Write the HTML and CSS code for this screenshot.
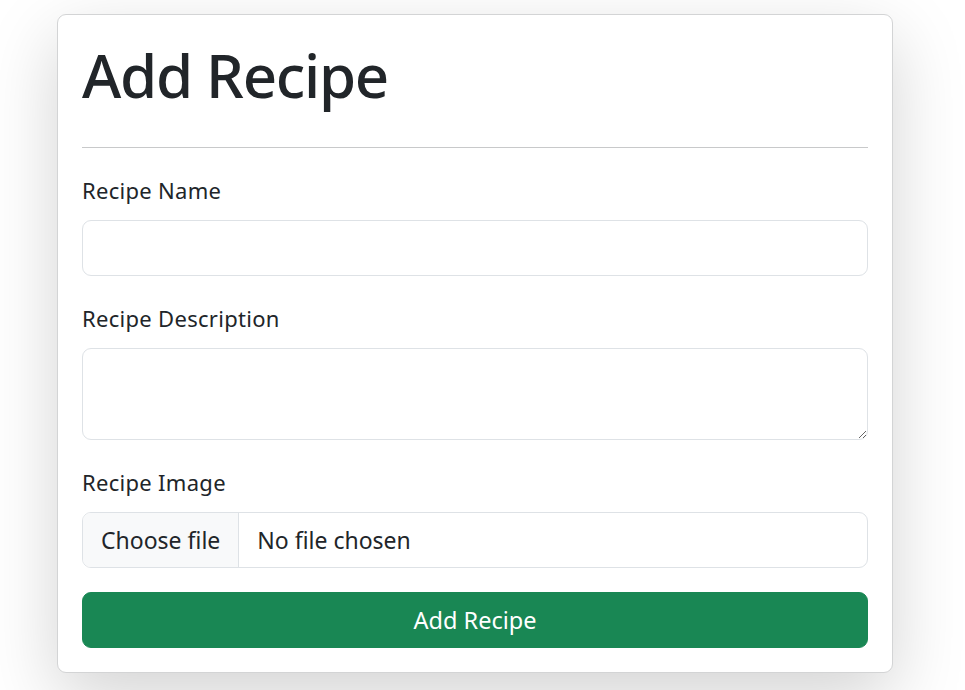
FILE: index.html
```html
<!DOCTYPE html>
<html lang="en">
<head>
<meta charset="utf-8">
<title>Add Recipe</title>
<link rel="stylesheet" href="styles.css">
</head>
<body>
<main class="page">
  <section class="card">
    <h1 class="title">Add Recipe</h1>
    <hr class="divider">
    <form class="form">
      <div class="field">
        <label class="label" for="name">Recipe Name</label>
        <input class="control" id="name" type="text">
      </div>
      <div class="field">
        <label class="label" for="desc">Recipe Description</label>
        <textarea class="control textarea" id="desc"></textarea>
      </div>
      <div class="field">
        <label class="label" for="img">Recipe Image</label>
        <div class="file" id="img">
          <span class="file-btn">Choose file</span>
          <span class="file-name">No file chosen</span>
        </div>
      </div>
      <button class="submit" type="button">Add Recipe</button>
    </form>
  </section>
</main>
</body>
</html>
```

FILE: styles.css
```css
* { box-sizing: border-box; }
html, body {
  margin: 0;
  background: #ffffff;
}
body {
  font-family: "Noto Sans", "Open Sans", sans-serif;
  color: #212529;
  font-size: 24px;
  line-height: 1.5;
  min-height: 100vh;
}
.page {
  padding: 14px 0 30px 57px;
}
.card {
  display: flex;
  flex-direction: column;
  width: 836px;
  background: #fff;
  border: 1px solid #d3d4d5;
  border-radius: 9px;
  padding: 24px;
  box-shadow: 0 24px 72px rgba(0, 0, 0, 0.175);
}
.title {
  margin: 0 0 12px;
  font-size: 60px;
  line-height: 72px;
  font-weight: 500;
  letter-spacing: -1.3px;
  color: #212529;
}
.divider {
  width: 100%;
  margin: 24px 0;
  border: 0;
  border-top: 1px solid #c8c9ca;
}
.form {
  display: flex;
  flex-direction: column;
}
.field {
  display: flex;
  flex-direction: column;
  margin-bottom: 24px;
}
.label {
  font-size: 22px;
  line-height: 36px;
  letter-spacing: 0.3px;
  margin-bottom: 12px;
  color: #212529;
}
.control {
  display: block;
  width: 100%;
  height: 56px;
  border: 1px solid #dee2e6;
  border-radius: 9px;
  background: #fff;
  font-family: inherit;
  font-size: 24px;
  padding: 9px 18px;
  color: #212529;
  outline: none;
}
.textarea {
  height: 92px;
  resize: vertical;
}
.file {
  display: flex;
  height: 56px;
  border: 1px solid #dee2e6;
  border-radius: 9px;
  overflow: hidden;
  font-size: 23px;
}
.file-btn {
  display: flex;
  align-items: center;
  padding: 0 18px;
  background: #f8f9fa;
  border-right: 1px solid #dee2e6;
  color: #212529;
}
.file-name {
  display: flex;
  align-items: center;
  padding: 0 18px;
  color: #212529;
}
.submit {
  height: 56px;
  width: 100%;
  border: 1px solid #198754;
  border-radius: 9px;
  background: #198754;
  color: #fff;
  font-family: inherit;
  font-size: 23.5px;
}
```
